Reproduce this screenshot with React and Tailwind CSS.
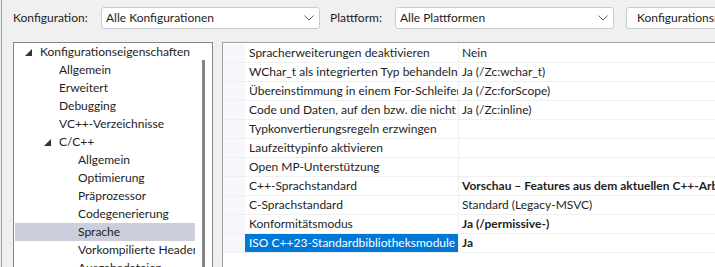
import React from "react";

const F = { fontFamily: '"Segoe UI", Lato, "Noto Sans", sans-serif' };

function Chevron() {
  return (
    <svg width="10" height="6" viewBox="0 0 10 6" className="shrink-0">
      <path d="M0.5 0.5 L5 5 L9.5 0.5" fill="none" stroke="#606060" strokeWidth="1" />
    </svg>
  );
}

function Tri() {
  return (
    <svg width="7" height="7" viewBox="0 0 7 7" className="shrink-0">
      <path d="M7 0 L7 7 L0 7 Z" fill="#333" />
    </svg>
  );
}

const tree = [
  { t: "Konfigurationseigenschaften", l: 0, tri: true },
  { t: "Allgemein", l: 1 },
  { t: "Erweitert", l: 1 },
  { t: "Debugging", l: 1 },
  { t: "VC++-Verzeichnisse", l: 1 },
  { t: "C/C++", l: 1, tri: true },
  { t: "Allgemein", l: 2 },
  { t: "Optimierung", l: 2 },
  { t: "Präprozessor", l: 2 },
  { t: "Codegenerierung", l: 2 },
  { t: "Sprache", l: 2, sel: true },
  { t: "Vorkompilierte Header", l: 2 },
  { t: "Ausgabedateien", l: 2 },
];

const props = [
  ["Spracherweiterungen deaktivieren", "Nein"],
  ["WChar_t als integrierten Typ behandeln", "Ja (/Zc:wchar_t)"],
  ["Übereinstimmung in einem For-Schleifenbereich erzwingen", "Ja (/Zc:forScope)"],
  ["Code und Daten, auf den bzw. die nicht verwiesen wird, entfernen", "Ja (/Zc:inline)"],
  ["Typkonvertierungsregeln erzwingen", ""],
  ["Laufzeittypinfo aktivieren", ""],
  ["Open MP-Unterstützung", ""],
  ["C++-Sprachstandard", "Vorschau – Features aus dem aktuellen C++-Arbeitsentwurf (/std:c++latest)", true],
  ["C-Sprachstandard", "Standard (Legacy-MSVC)"],
  ["Konformitätsmodus", "Ja (/permissive-)", true],
  ["ISO C++23-Standardbibliotheksmodule", "Ja", true, true],
];

export default function App() {
  return (
    <div
      className="w-[715px] h-[267px] overflow-hidden bg-[#f0f0f0] text-[12px] text-[#1e1e1e] flex"
      style={F}
    >
      <div className="w-px bg-[#a0a0a0] ml-px h-full shrink-0" />
      <div className="flex-1 flex flex-col min-w-0">
        {/* Top bar */}
        <div className="h-[42px] shrink-0 flex items-start pt-[7px] whitespace-nowrap">
          <div className="ml-[11px] w-[88px] shrink-0 h-[22px] flex items-center">Konfiguration:</div>
          <div className="w-[219px] shrink-0 h-[22px] bg-white border border-[#cccccc] rounded-[3px] flex items-center justify-between pl-[4px] pr-[5px]">
            <span>Alle Konfigurationen</span>
            <Chevron />
          </div>
          <div className="ml-[10px] w-[65px] shrink-0 h-[22px] flex items-center">Plattform:</div>
          <div className="w-[219px] shrink-0 h-[22px] bg-white border border-[#cccccc] rounded-[3px] flex items-center justify-between pl-[4px] pr-[5px]">
            <span>Alle Plattformen</span>
            <Chevron />
          </div>
          <div className="ml-[12px] w-[120px] shrink-0 h-[22px] bg-[#fdfdfd] border border-[#cccccc] rounded-[3px] flex items-center pl-[10px] overflow-hidden">
            Konfigurationsmanager...
          </div>
        </div>

        {/* Body */}
        <div className="flex-1 flex min-h-0">
          {/* Tree */}
          <div className="ml-[11px] w-[200px] shrink-0 border-l border-t border-r border-[#828790] bg-white flex relative overflow-hidden">
            <div className="flex-1 flex flex-col pl-px pt-0 min-w-0">
              {tree.map((n, i) => (
                <div
                  key={i}
                  className={`h-[18px] shrink-0 flex items-center whitespace-nowrap overflow-hidden ${
                    n.sel ? "bg-[#cccedb]" : ""
                  }`}
                >
                  <div
                    className={`flex items-center justify-end shrink-0 pr-[8px] ${
                      n.l === 0 ? "w-[25px]" : n.l === 1 ? "w-[44px]" : "w-[63px]"
                    }`}
                  >
                    {n.tri ? <Tri /> : null}
                  </div>
                  <span className="overflow-hidden">{n.t}</span>
                </div>
              ))}
            </div>
            <div className="w-[17px] shrink-0 flex justify-center pt-[17px]">
              <div className="w-[3px] h-full bg-[#858585]" />
            </div>
          </div>

          {/* Property grid */}
          <div className="ml-[9px] flex-1 border-l border-t border-[#a0a0a0] bg-white flex flex-col min-w-0 overflow-hidden pt-px">
            {props.map(([k, v, b, sel], i) => (
              <div key={i} className="h-[19px] shrink-0 flex border-b border-[#f0f0f0]">
                <div className="w-[22px] shrink-0 bg-[#f5f7fb]" />
                <div
                  className={`w-[214px] shrink-0 pl-[4px] flex items-center whitespace-nowrap overflow-hidden border-r border-[#f0f0f0] ${
                    sel ? "bg-[#0078d7] text-white" : ""
                  }`}
                >
                  <span className="overflow-hidden">{k}</span>
                </div>
                <div
                  className={`flex-1 pl-[3px] flex items-center whitespace-nowrap overflow-hidden ${
                    b ? "font-bold" : ""
                  }`}
                >
                  {v}
                </div>
              </div>
            ))}
          </div>
        </div>
      </div>
    </div>
  );
}
